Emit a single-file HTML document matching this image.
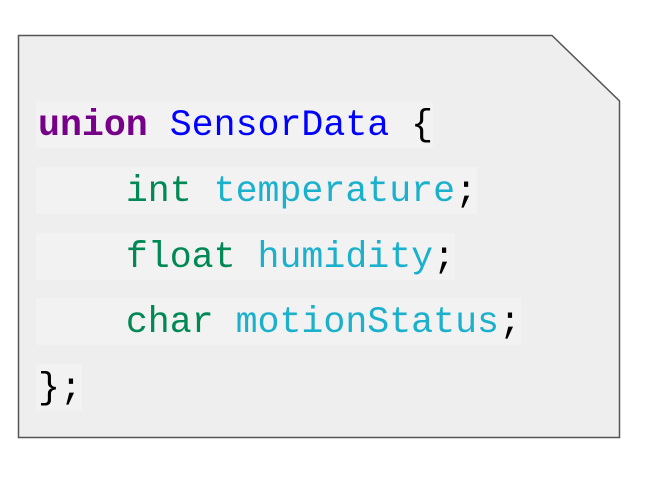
<!DOCTYPE html>
<html><head><style>
body{margin:0;width:665px;height:484px;background:#fff;position:relative;overflow:hidden}
svg{position:absolute;left:0;top:0}
.l{position:absolute;left:36px;height:47px;line-height:49px;font-family:"Liberation Mono",monospace;font-size:36.6px;background:#f2f2f2;white-space:pre;color:#000;padding-left:2px}
.k{color:#770088;font-weight:bold}.t{color:#0000ff}.g{color:#008855}.v{color:#1bb0cc}
</style></head><body>
<svg width="665" height="484"><polygon points="18.5,35.5 552,35.5 619.5,101 619.5,437.5 18.5,437.5" fill="#eeeeee" stroke="#555" stroke-width="1.5"/></svg>
<div class="l" style="top:101px"><span class="k">union</span> <span class="t">SensorData</span> {</div>
<div class="l" style="top:167px">    <span class="g">int</span> <span class="v">temperature</span>;</div>
<div class="l" style="top:233px">    <span class="g">float</span> <span class="v">humidity</span>;</div>
<div class="l" style="top:298px">    <span class="g">char</span> <span class="v">motionStatus</span>;</div>
<div class="l" style="top:364px">};</div>
</body></html>
